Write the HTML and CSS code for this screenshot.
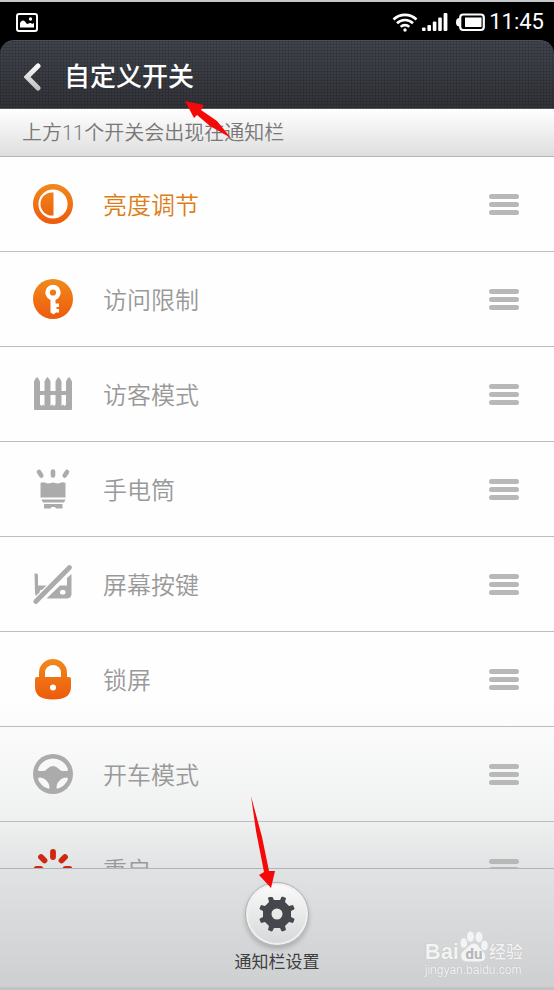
FILE: index.html
```html
<!DOCTYPE html>
<html lang="zh-CN">
  <head>
    <meta charset="UTF-8" />
    <meta name="viewport" content="width=device-width, initial-scale=1.0" />
    <title>自定义开关</title>
    <link rel="stylesheet" href="styles.css">
  </head>
  <body>
    <!-- shared gradients -->
    <svg class="defs" width="0" height="0" aria-hidden="true">
      <defs>
        <linearGradient id="orange" x1="0" y1="0" x2="0" y2="40" gradientUnits="userSpaceOnUse">
          <stop offset="0" stop-color="#f08a1c" />
          <stop offset="1" stop-color="#ee5a0c" />
        </linearGradient>
        <linearGradient id="silver" x1="0" y1="0" x2="0" y2="28" gradientUnits="userSpaceOnUse">
          <stop offset="0" stop-color="#ffffff" />
          <stop offset="1" stop-color="#bcbcbc" />
        </linearGradient>
      </defs>
    </svg>

    <div class="statusBar">
      <svg class="photoIcon" width="22" height="19" viewBox="0 0 22 19">
        <rect x="1" y="1" width="20" height="17" rx="2" fill="none" stroke="#fff" stroke-width="2" />
        <path d="M4 14.500V10q2.500-4 5-1.500l1.500 2q1 .8 2 0t2.500-.5l1 1 2-1v4.500z" fill="#fff" />
        <circle cx="14.500" cy="6" r="1.700" fill="#fff" />
      </svg>
      <div class="statusIcons">
        <svg width="26" height="20" viewBox="0 0 26 20" fill="none" stroke="#fff" stroke-width="2.600">
          <path d="M1.500 7.500a16.500 16.500 0 0 1 23 0" />
          <path d="M5 11.300a11.500 11.500 0 0 1 16 0" />
          <path d="M8.700 14.900a6.200 6.200 0 0 1 8.600 0" />
          <circle cx="13" cy="18" r="1.700" fill="#fff" stroke="none" />
        </svg>
        <svg width="26" height="20" viewBox="0 0 26 20" fill="#fff">
          <rect x="0" y="15.500" width="3.600" height="3.500" rx="1" />
          <rect x="5.400" y="13" width="3.600" height="6" rx="1" />
          <rect x="10.800" y="9.500" width="3.600" height="9.500" rx="1" />
          <rect x="16.200" y="5.500" width="3.600" height="13.500" rx="1" />
          <rect x="21.600" y="1" width="3.800" height="18" rx="1" />
        </svg>
        <svg class="battery" width="29" height="20" viewBox="0 0 29 20">
          <rect x="4.200" y="2.500" width="23.600" height="15.500" rx="3" fill="none" stroke="#fff" stroke-width="2.200" />
          <path d="M3.500 6Q0 6 0 10.300t3.500 4.300z" fill="#fff" />
          <rect x="9" y="5.500" width="16.500" height="9.500" fill="#fff" />
        </svg>
        <span class="clock">11:45</span>
      </div>
    </div>

    <header class="titleBar">
      <button class="backButton" type="button" aria-label="返回">
        <svg width="20" height="28" viewBox="0 0 20 28">
          <path d="M14 3 3 14 14 25" fill="none" stroke="url(#silver)" stroke-width="5" stroke-linecap="round" />
        </svg>
      </button>
      <h1>自定义开关</h1>
    </header>

    <main>
      <p class="hint">上方11个开关会出现在通知栏</p>
      <ul class="switchList">
        <li class="on">
          <svg class="icon" viewBox="0 0 40 40">
            <circle cx="20" cy="20" r="17.300" fill="#fff" stroke="url(#orange)" stroke-width="5.400" />
            <path d="M20.500 8.500v23H19a11.500 11.500 0 0 1 0-23z" fill="url(#orange)" />
          </svg>
          <span class="name">亮度调节</span>
          <button class="handle" type="button" aria-label="排序"><i></i><i></i><i></i></button>
        </li>
        <li>
          <svg class="icon" viewBox="0 0 40 40">
            <circle cx="20" cy="20" r="20" fill="url(#orange)" />
            <circle cx="20" cy="13.500" r="5.400" fill="none" stroke="#fff" stroke-width="4.600" />
            <path d="M17.500 18h5v6.500h3.500v3.500h-2.500v2h2.500v3.500h-3l-2.500 2-3-2z" fill="#fff" />
          </svg>
          <span class="name">访问限制</span>
          <button class="handle" type="button" aria-label="排序"><i></i><i></i><i></i></button>
        </li>
        <li>
          <svg class="icon grey" viewBox="0 0 40 40">
            <path d="M1 35V7.500Q2 4.500 4 3q2 1.500 3 4.500V17h4.500V7.500q1-3 3-4.500 2 1.500 3 4.500V17h5V7.500q1-3 3-4.500 2 1.500 3 4.500V17H33V7.500q1-3 3-4.500 2 1.500 3 4.500V35q0 1-1 1H2q-1 0-1-1z" />
            <path d="M7 21h4.500v11L10 30.500 8.500 32 7 30.500zM17.500 21h5v9.500L21 32l-1.500-1.500-2 1.500zM28.500 21H33v9.500L31.500 32 30 30.500 28.500 32z" fill="#fff" />
          </svg>
          <span class="name">访客模式</span>
          <button class="handle" type="button" aria-label="排序"><i></i><i></i><i></i></button>
        </li>
        <li>
          <svg class="icon grey" viewBox="0 0 40 40">
            <path d="M6 3 8.300 6.500M20 2.500v4M34 3l-2.300 3.500" fill="none" stroke="#ababab" stroke-width="4.600" stroke-linecap="round" />
            <path d="M7.500 14q3-1.500 5.500 0l2 .6 3-.6q2-1.200 4 0l3 .6 2-.6q3-1.500 5.500 0V28.500h-25z" />
            <path d="M8.500 30.500h24l-1.500 3H10zM11 35h18.500v4.500h-6.500l-1-1.500h-3.500l-1 1.500H11z" />
          </svg>
          <span class="name">手电筒</span>
          <button class="handle" type="button" aria-label="排序"><i></i><i></i><i></i></button>
        </li>
        <li>
          <svg class="icon grey" viewBox="0 0 40 40">
            <path d="M1.500 9.500h2q1.500 0 1.500 1.500V21.500h12L5 34Q2 32 2 29zM38.500 10v19.500q0 5-5 5H13.500L27 21.500h7V14z" />
            <path d="M2.500 38 37 3.500" fill="none" stroke="#fff" stroke-width="8" />
            <circle cx="8.500" cy="27.500" r="1.800" fill="#fff" />
            <rect x="27" y="26" width="5.500" height="4.500" rx="1.800" fill="#fff" />
            <path d="M2.800 37.500 36.500 3.500" fill="none" stroke="#ababab" stroke-width="4.800" stroke-linecap="round" />
          </svg>
          <span class="name">屏幕按键</span>
          <button class="handle" type="button" aria-label="排序"><i></i><i></i><i></i></button>
        </li>
        <li>
          <svg class="icon" viewBox="0 0 40 40">
            <path d="M6 18v-4a14 14 0 0 1 28 0v4h2q2 0 2 2v8q0 12.500-18 12.500T2 28v-8q0-2 2-2z" fill="url(#orange)" />
            <path d="M12 18v-4.500a8 7.500 0 0 1 16 0V18z" fill="#fff" />
            <circle cx="20" cy="28.500" r="3" fill="#fff" />
          </svg>
          <span class="name">锁屏</span>
          <button class="handle" type="button" aria-label="排序"><i></i><i></i><i></i></button>
        </li>
        <li>
          <svg class="icon grey" viewBox="0 0 40 40">
            <circle cx="20" cy="20" r="20" />
            <path d="M5 15.500C7 9 13 4.500 20 4.500S33 9 35 15.500q0 1.500-1.500 1.500h-4q-2 0-3.500-2-6-6-12 0-1.500 2-3.500 2h-4Q5 17 5 15.500zM6.500 23.500c5 0 10 4.500 10 10q0 1.500-1.500 1C10 33 6.500 29 5 25q0-1.500 1.500-1.500zM33.500 23.500c-5 0-10 4.500-10 10q0 1.500 1.500 1C30 33 33.500 29 35 25q0-1.500-1.500-1.500z" fill="#f8f8f8" />
          </svg>
          <span class="name">开车模式</span>
          <button class="handle" type="button" aria-label="排序"><i></i><i></i><i></i></button>
        </li>
        <li>
          <svg class="icon" viewBox="0 0 40 40" fill="none" stroke="#cf2810" stroke-width="5.800" stroke-linecap="round">
            <path d="M20 3v5M8 8l3.500 3.500M32 8l-3.500 3.500M3.500 20h4M36.500 20h-4M8 32l3.500-3.500M32 32l-3.500-3.500M20 37v-5" />
          </svg>
          <span class="name">重启</span>
          <button class="handle" type="button" aria-label="排序"><i></i><i></i><i></i></button>
        </li>
      </ul>
    </main>

    <footer class="toolbar">
      <button class="settings" type="button">
        <span class="knob">
          <svg width="36" height="36" viewBox="-18 -18 36 36" fill="#45474d">
            <path fill-rule="evenodd" d="M-3-14-4.500-17h-3.500L-9-16-8-12-12-8-16-9-17.500-5.500-17-4.500-14-3V3L-17 4.500-17.500 5.500-16 9-12 8-8 12-9 16-5.500 17.500-4.500 17-3 14H3L4.500 17 5.500 17.500 9 16 8 12 12 8 16 9 17.500 5.500 17 4.500 14 3V-3L17-4.500 17.500-5.500 16-9 12-8 8-12 9-16 5.500-17.500 4.500-17 3-14zM0-5.500a5.500 5.500 0 1 0 0 11 5.500 5.500 0 1 0 0-11z" />
          </svg>
        </span>
        <span>通知栏设置</span>
      </button>
    </footer>

    <!-- pointers drawn over the screen -->
    <svg class="arrow arrowTitle" width="48" height="40" viewBox="0 0 48 40">
      <path d="M0 1 19 5 16 10 32 21 46 38 25 26 12 15 9 18z" />
    </svg>
    <svg class="arrow arrowSettings" width="26" height="92" viewBox="0 0 26 92">
      <path d="M0 0 11 41 18 75 24 75 20 92 8 79 13 76 5 35z" />
    </svg>

    <div class="watermark">
      <div class="brand">
        <span class="bai">Bai</span>
        <span class="paw">
          <svg width="28" height="31" viewBox="0 0 28 31" fill="#f3f4f4">
            <ellipse cx="3.800" cy="12" rx="3.300" ry="4.800" />
            <ellipse cx="10.500" cy="5.500" rx="3.500" ry="5.200" />
            <ellipse cx="19" cy="6" rx="3.500" ry="5.200" />
            <ellipse cx="24.500" cy="14.500" rx="3.300" ry="4.800" />
            <path d="M14 12.500c4 0 5 4 8 7 5 4 4 11-2 11H7c-6 0-8-7-3-11 4-3 6-7 10-7z" />
          </svg>
          <span class="du">du</span>
        </span>
        <span class="jing">经验</span>
      </div>
      <div class="site">jingyan.baidu.com</div>
    </div>
  </body>
</html>
```

FILE: styles.css
```css
* {
  box-sizing: border-box;
}

body {
  position: relative;
  display: flex;
  flex-direction: column;
  height: 100vh;
  margin: 0;
  overflow: hidden;
  font-family: Roboto, "Noto Sans CJK SC", sans-serif;
  background-color: #000;
  border-top: 2px solid #c6c8ca;
}

h1,
p,
ul {
  margin: 0;
  padding: 0;
}

button {
  padding: 0;
  border: none;
  background: none;
  font-family: inherit;
  cursor: pointer;
}

svg {
  display: block;
  flex: none;
}

.defs {
  position: absolute;
}

/* Status bar */
.statusBar {
  display: flex;
  flex: none;
  align-items: center;
  justify-content: space-between;
  height: 38px;
  padding: 2px 10px 0 16px;
  color: #fff;
}

.statusIcons {
  display: flex;
  align-items: center;
  gap: 4px;
}

.battery {
  margin-left: 4px;
}

.clock {
  font-size: 22px;
  line-height: 36px;
}

/* Title bar */
.titleBar {
  display: flex;
  flex: none;
  align-items: center;
  gap: 20px;
  height: 69px;
  padding: 4px 24px 0;
  border-top: 1px solid #4b4e55;
  border-bottom: 1px solid #55565a;
  border-radius: 14px 14px 0 0;
  color: #fff;
  background-image: repeating-linear-gradient(to right, rgba(0, 0, 0, 0.12) 0 1px, transparent 1px 3px),
    repeating-linear-gradient(rgba(0, 0, 0, 0.12) 0 1px, transparent 1px 3px),
    linear-gradient(#41444d, #323339);
}

h1 {
  font-size: 26px;
  font-weight: 500;
  line-height: 40px;
}

/* List */
main {
  display: flex;
  flex: 1;
  flex-direction: column;
  min-height: 0;
  background-image: linear-gradient(#fefefe 78%, #f0f1f1 93%, #e2e3e4);
}

.hint {
  flex: none;
  height: 48px;
  padding-left: 22px;
  border-bottom: 1px solid #b4b4b4;
  font-size: 20px;
  font-weight: 350;
  line-height: 48px;
  color: #777;
  background-image: linear-gradient(#fff, #dedede);
}

.switchList {
  flex: 1;
  min-height: 0;
  overflow: hidden;
  list-style: none;
}

.switchList li {
  display: flex;
  align-items: center;
  gap: 30px;
  height: 95px;
  padding: 0 35px 0 33px;
  border-bottom: 1px solid #bbbcbd;
  color: #999;
}

.switchList .on {
  color: #dc7d18;
}

.icon {
  width: 40px;
  height: 40px;
  overflow: visible;
}

.grey {
  fill: #ababab;
}

.name {
  flex: 1;
  padding-top: 3px;
  font-size: 24px;
  font-weight: 350;
  line-height: 36px;
}

.handle {
  display: flex;
  flex-direction: column;
  gap: 3px;
  width: 30px;
}

.handle i {
  height: 5px;
  border-radius: 3px;
  background-color: #b8b8b8;
}

/* Bottom toolbar */
.toolbar {
  display: flex;
  flex: none;
  justify-content: center;
  height: 122px;
  padding-top: 13px;
  border-top: 1px solid #b2b3b4;
  border-bottom: 3px solid #c2c3c5;
  background-image: linear-gradient(#e1e2e3, #cdcfd1);
}

.settings {
  display: flex;
  flex-direction: column;
  align-items: center;
  gap: 4px;
  font-size: 17px;
  line-height: 24px;
  color: #3e3f42;
}

.knob {
  display: flex;
  align-items: center;
  justify-content: center;
  width: 64px;
  height: 64px;
  border: 1px solid #b0b1b3;
  border-radius: 50%;
  background-image: linear-gradient(#fbfbfb, #d6d7d8);
  box-shadow: inset 0 0 0 2px #f0f0f0, 0 3px 5px rgba(0, 0, 0, 0.2);
}

/* Arrows */
.arrow {
  position: absolute;
  fill: #f50808;
}

.arrowTitle {
  top: 98px;
  left: 185px;
}

.arrowSettings {
  top: 794px;
  left: 251px;
}

/* Watermark */
.watermark {
  position: absolute;
  right: 31px;
  bottom: 12px;
  color: #f3f4f4;
  text-shadow: 0 0 1px #aaa;
}

.brand {
  display: flex;
  align-items: flex-end;
  height: 33px;
}

.bai {
  font-family: "Liberation Sans", sans-serif;
  font-size: 22px;
  font-weight: bold;
  line-height: 20px;
}

.paw {
  position: relative;
  margin: 0 1px;
}

.du {
  position: absolute;
  right: 0;
  bottom: 0;
  left: 0;
  font-size: 15px;
  font-weight: bold;
  line-height: 16px;
  text-align: center;
  color: #b5b6b8;
  text-shadow: none;
}

.jing {
  font-size: 17px;
  font-weight: 500;
  line-height: 20px;
}

.site {
  font-family: "Liberation Sans", sans-serif;
  font-size: 12px;
  line-height: 16px;
}
```
